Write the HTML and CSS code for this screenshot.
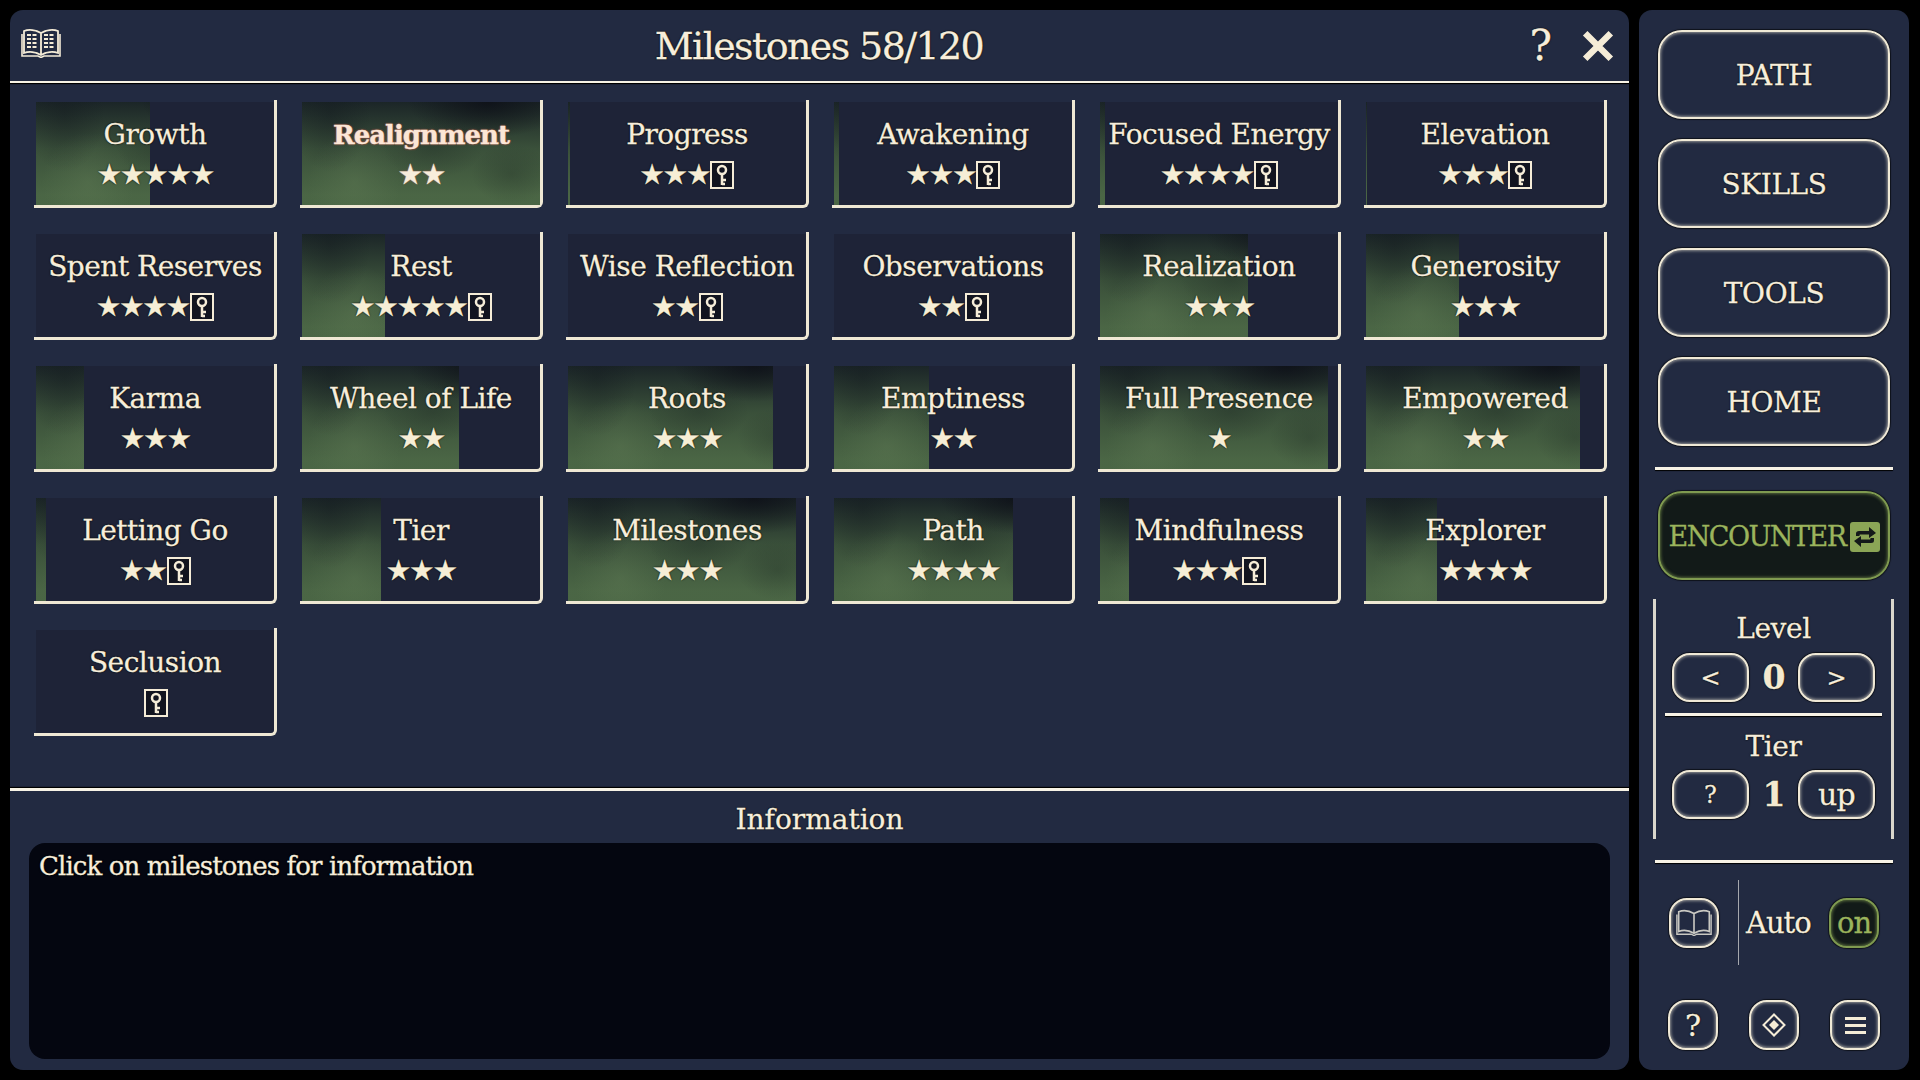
FILE: index.html
```html
<!DOCTYPE html>
<html lang="en">

<head>
    <meta charset="UTF-8">
    <title>Milestones</title>
    <link rel="stylesheet" href="styles.css">
</head>

<body>
    <svg class="defs" width="0" height="0">
        <symbol id="key" viewBox="0 0 24 28">
            <rect x="1" y="1" width="22" height="26" fill="#12141f" stroke="#f5ecd7" stroke-width="2" />
            <circle cx="12" cy="9" r="4" fill="none" stroke="#f5ecd7" stroke-width="2.5" />
            <path d="M12 13V24M12 19H16M12 23H15" fill="none" stroke="#f5ecd7" stroke-width="2.5" />
        </symbol>
        <symbol id="book" viewBox="0 0 40 30">
            <path d="M20 5C15 2 8 1 3 3V25C8 23 15 24 20 27C25 24 32 23 37 25V3C32 1 25 2 20 5ZM20 5V27" fill="none" stroke="currentColor" stroke-width="1.8" />
            <path d="M1 6V28H17L20 29.5L23 28H39V6" fill="none" stroke="currentColor" stroke-width="1.6" />
        </symbol>
    </svg>

    <div class="main">
        <div class="header">
            <svg class="logo" viewBox="0 0 40 30">
                <use href="#book" />
                <path d="M6 7H17M6 11H17M6 15H17M6 19H17M23 7H34M23 11H34M23 15H34M23 19H34" fill="none" stroke="#f5ecd7" stroke-width="2" stroke-dasharray="4 1.5" />
            </svg>
            <div class="title">Milestones 58/120</div>
            <div class="actions">
                <span class="help">?</span>
                <svg class="close" viewBox="0 0 30 30">
                    <path d="M3 3L27 27M27 3L3 27" stroke="#f5ecd7" stroke-width="6" />
                </svg>
            </div>
        </div>

        <div class="grid">
            <div class="card"><div class="fill" style="width:48%"></div><div class="name">Growth</div><div class="stars">★★★★★</div></div>
            <div class="card active"><div class="fill" style="width:100%"></div><div class="name">Realignment</div><div class="stars">★★</div></div>
            <div class="card"><div class="fill" style="width:1%"></div><div class="name">Progress</div><div class="stars">★★★<svg class="key"><use href="#key" /></svg></div></div>
            <div class="card"><div class="fill" style="width:2%"></div><div class="name">Awakening</div><div class="stars">★★★<svg class="key"><use href="#key" /></svg></div></div>
            <div class="card"><div class="fill" style="width:2%"></div><div class="name">Focused Energy</div><div class="stars">★★★★<svg class="key"><use href="#key" /></svg></div></div>
            <div class="card"><div class="fill" style="width:0.5%"></div><div class="name">Elevation</div><div class="stars">★★★<svg class="key"><use href="#key" /></svg></div></div>

            <div class="card"><div class="name">Spent Reserves</div><div class="stars">★★★★<svg class="key"><use href="#key" /></svg></div></div>
            <div class="card"><div class="fill" style="width:35%"></div><div class="name">Rest</div><div class="stars">★★★★★<svg class="key"><use href="#key" /></svg></div></div>
            <div class="card"><div class="name">Wise Reflection</div><div class="stars">★★<svg class="key"><use href="#key" /></svg></div></div>
            <div class="card"><div class="name">Observations</div><div class="stars">★★<svg class="key"><use href="#key" /></svg></div></div>
            <div class="card"><div class="fill" style="width:62%"></div><div class="name">Realization</div><div class="stars">★★★</div></div>
            <div class="card"><div class="fill" style="width:39%"></div><div class="name">Generosity</div><div class="stars">★★★</div></div>

            <div class="card"><div class="fill" style="width:20%"></div><div class="name">Karma</div><div class="stars">★★★</div></div>
            <div class="card"><div class="fill" style="width:66%"></div><div class="name">Wheel of Life</div><div class="stars">★★</div></div>
            <div class="card"><div class="fill" style="width:86%"></div><div class="name">Roots</div><div class="stars">★★★</div></div>
            <div class="card"><div class="fill" style="width:40%"></div><div class="name">Emptiness</div><div class="stars">★★</div></div>
            <div class="card"><div class="fill" style="width:96%"></div><div class="name">Full Presence</div><div class="stars">★</div></div>
            <div class="card"><div class="fill" style="width:90%"></div><div class="name">Empowered</div><div class="stars">★★</div></div>

            <div class="card"><div class="fill" style="width:4%"></div><div class="name">Letting Go</div><div class="stars">★★<svg class="key"><use href="#key" /></svg></div></div>
            <div class="card"><div class="fill" style="width:33%"></div><div class="name">Tier</div><div class="stars">★★★</div></div>
            <div class="card"><div class="fill" style="width:96%"></div><div class="name">Milestones</div><div class="stars">★★★</div></div>
            <div class="card"><div class="fill" style="width:75%"></div><div class="name">Path</div><div class="stars">★★★★</div></div>
            <div class="card"><div class="fill" style="width:12%"></div><div class="name">Mindfulness</div><div class="stars">★★★<svg class="key"><use href="#key" /></svg></div></div>
            <div class="card"><div class="fill" style="width:30%"></div><div class="name">Explorer</div><div class="stars">★★★★</div></div>

            <div class="card"><div class="name">Seclusion</div><div class="stars"><svg class="key"><use href="#key" /></svg></div></div>
        </div>

        <div class="info">
            <div class="info-title">Information</div>
            <div class="info-box">Click on milestones for information</div>
        </div>
    </div>

    <div class="side">
        <div class="nav">
            <div class="btn big">PATH</div>
            <div class="btn big">SKILLS</div>
            <div class="btn big">TOOLS</div>
            <div class="btn big">HOME</div>
        </div>
        <div class="line line-nav"></div>
        <div class="btn big green encounter">
            ENCOUNTER
            <svg class="swap" viewBox="0 0 30 30">
                <rect width="30" height="30" rx="3" fill="#8ba556" />
                <path d="M6 14V11.500Q6 9 9 9H19V5L26 11L19 16V12.500H10Q9.500 12.500 9.500 13.500V14Z" fill="#14191a" />
                <path d="M24 16V18.500Q24 21 21 21H11V25L4 19L11 14V17.500H20Q20.500 17.500 20.500 16.500V16Z" fill="#14191a" />
            </svg>
        </div>

        <div class="levels">
            <div class="level-block">
                <div class="label">Level</div>
                <div class="stepper">
                    <div class="btn small">&lt;</div>
                    <div class="count">0</div>
                    <div class="btn small">&gt;</div>
                </div>
            </div>
            <div class="line line-level"></div>
            <div class="level-block">
                <div class="label">Tier</div>
                <div class="stepper">
                    <div class="btn small">?</div>
                    <div class="count">1</div>
                    <div class="btn small up">up</div>
                </div>
            </div>
        </div>

        <div class="line line-auto"></div>

        <div class="auto">
            <div class="btn round">
                <svg class="book-icon" viewBox="0 0 40 30"><use href="#book" /></svg>
            </div>
            <div class="auto-sep"></div>
            <div class="auto-label">Auto</div>
            <div class="btn round green on">on</div>
        </div>

        <div class="bottom">
            <div class="btn round mark">?</div>
            <div class="btn round">
                <svg class="diamond" viewBox="0 0 24 24">
                    <path d="M12 1.500L22.500 12L12 22.500L1.500 12Z" fill="none" stroke="#f5ecd7" stroke-width="2" />
                    <path d="M12 7L17 12L12 17L7 12Z" fill="#f5ecd7" />
                </svg>
            </div>
            <div class="btn round">
                <div class="burger"><span></span><span></span><span></span></div>
            </div>
        </div>
    </div>
</body>

</html>
```

FILE: styles.css
```css
* {
    margin: 0;
    padding: 0;
    box-sizing: border-box;
}

body {
    width: 1920px;
    height: 1080px;
    background: #000;
    display: flex;
    gap: 10px;
    padding: 10px 11px 10px 10px;
    overflow: hidden;
    font-family: "DejaVu Serif", "Liberation Serif", serif;
    color: #f7eedb;
    text-shadow: 0 0 2px #000, 0 0 1px #000;
    -webkit-text-stroke: .3px;
}

.defs {
    position: absolute;
}

/* left panel */
.main {
    width: 1619px;
    background: #222a41;
    border-radius: 13px;
    display: flex;
    flex-direction: column;
}

.header {
    height: 73px;
    display: grid;
    grid-template-columns: 1fr auto 1fr;
    align-items: center;
    padding: 0 15px 0 14px;
    border-bottom: 2px solid #f8f3e6;
    box-shadow: 0 1px 1px #000;
}

.logo {
    width: 40px;
    height: 30px;
    color: #f5ecd7;
    margin: -6px 0 0 -3px;
}

.title {
    font-size: 38px;
    letter-spacing: -1.6px;
    margin-top: 1px;
}

.actions {
    display: flex;
    justify-content: flex-end;
    align-items: center;
    gap: 30px;
}

.help {
    font-size: 42px;
}

.close {
    width: 32px;
    height: 32px;
}

.grid {
    display: grid;
    grid-template-columns: repeat(6, 241px);
    grid-auto-rows: 106px;
    gap: 26px 25px;
    padding: 19px 0 0 26px;
    height: 705px;
}

.card {
    position: relative;
    background: #1e2337;
    border-right: 3px solid #efe8d4;
    border-bottom: 3px solid #efe8d4;
    border-bottom-right-radius: 6px;
    display: flex;
    flex-direction: column;
    align-items: center;
    padding-top: 15px;
}

/* the border lines stick out a little past the card corners */
.card::before {
    content: "";
    position: absolute;
    left: -2px;
    bottom: -3px;
    width: 2px;
    height: 3px;
    background: #efe8d4;
}

.card::after {
    content: "";
    position: absolute;
    right: -3px;
    top: -2px;
    width: 3px;
    height: 2px;
    background: #efe8d4;
}

.fill {
    position: absolute;
    left: 0;
    top: 0;
    bottom: 0;
    background:
        radial-gradient(ellipse 80px 36px at 78% 0, rgba(12, 14, 22, .8), transparent),
        radial-gradient(ellipse 40px 60px at 12% 10%, rgba(16, 22, 28, .35), transparent),
        radial-gradient(ellipse 50px 30px at 55% 45%, rgba(30, 42, 36, .35), transparent),
        radial-gradient(ellipse 40px 30px at 88% 70%, rgba(30, 42, 36, .3), transparent),
        radial-gradient(ellipse 46px 50px at 22% 78%, rgba(100, 128, 88, .35), transparent),
        linear-gradient(180deg, rgba(22, 30, 36, .9) 0, rgba(46, 64, 50, .6) 45%, rgba(60, 82, 58, .1) 90%),
        #4c6846;
    background-size: 238px 100%;
    background-repeat: no-repeat;
}

.name {
    position: relative;
    font-size: 28px;
    letter-spacing: -.5px;
    line-height: 36px;
    white-space: nowrap;
}

.stars {
    position: relative;
    font-family: "DejaVu Sans", sans-serif;
    font-size: 28px;
    letter-spacing: -1.8px;
    line-height: 32px;
    height: 32px;
    margin-top: 6px;
    display: flex;
    align-items: center;
    color: #f6eed6;
}

.key {
    width: 24px;
    height: 28px;
    margin-left: 1px;
}

.active .name {
    font-weight: bold;
    font-size: 26px;
    letter-spacing: -1px;
    color: #fbe6d6;
    text-shadow: 0 0 2px #a8524a, 0 0 2px #a8524a;
}

.active .stars {
    color: #f8eddb;
    text-shadow: 0 0 2px #a8524a;
}

.info {
    flex: 1;
    border-top: 3px solid #f8f3e6;
    box-shadow: 0 -1px 1px #000;
    padding: 0 19px 11px;
    display: flex;
    flex-direction: column;
}

.info-title {
    height: 52px;
    line-height: 57px;
    text-align: center;
    font-size: 28px;
}

.info-box {
    flex: 1;
    background: #040610;
    border-radius: 16px;
    padding: 5px 10px;
    font-size: 26px;
    letter-spacing: -.9px;
    line-height: 36px;
}

/* right panel */
.side {
    width: 270px;
    background: #222a41;
    border-radius: 13px;
    padding: 20px 16px 0;
    display: flex;
    flex-direction: column;
}

.btn {
    display: flex;
    align-items: center;
    justify-content: center;
    border: 2px solid #f0e9d6;
    box-shadow: inset 0 0 3px 1px rgba(225, 220, 205, .6), 0 0 1px 1px rgba(0, 0, 0, .6);
}

.big {
    height: 89px;
    margin: 0 3px;
    padding-top: 2px;
    border-radius: 24px;
    font-size: 28px;
    letter-spacing: -.4px;
}

.nav {
    display: flex;
    flex-direction: column;
    gap: 20px;
}

.line {
    height: 3px;
    background: #f8f3e6;
    box-shadow: 0 1px 1px #000;
}

.line-nav {
    margin-top: 21px;
    margin-bottom: 21px;
}

.green {
    background: #121a18;
    border-color: #7f9a50;
    color: #9bb45c;
    box-shadow: inset 0 0 3px 1px rgba(127, 154, 80, .6), 0 0 1px 1px rgba(0, 0, 0, .6);
}

.encounter {
    gap: 4px;
    font-size: 27px;
    letter-spacing: -1.5px;
    text-shadow: none;
}

.swap {
    width: 30px;
    height: 30px;
    flex: none;
}

.levels {
    margin: 19px 0 0 -2px;
    height: 240px;
    width: 241px;
    border-left: 3px solid #d9d6cc;
    border-right: 3px solid #d9d6cc;
    padding: 12px 9px 0;
}

.label {
    font-size: 28px;
    letter-spacing: -.4px;
    line-height: 36px;
    text-align: center;
}

.stepper {
    display: grid;
    grid-template-columns: 77px 1fr 77px;
    align-items: center;
    padding: 6px 7px 0;
}

.small {
    height: 49px;
    border-radius: 18px;
    font-size: 24px;
}

.up {
    font-size: 30px;
    letter-spacing: -.8px;
}

.count {
    font-size: 33px;
    font-weight: bold;
    letter-spacing: -1px;
    text-align: center;
    color: #f3e9cf;
}

.line-level {
    margin: 11px 0 13px;
}

.level-block + .line + .level-block .stepper {
    padding-top: 5px;
}

.line-auto {
    margin-top: 21px;
}

.auto {
    display: flex;
    align-items: center;
    height: 85px;
    margin-top: 17px;
    padding-left: 14px;
}

.round {
    width: 50px;
    height: 50px;
    border-radius: 18px;
    flex: none;
}

.book-icon {
    width: 36px;
    height: 27px;
    color: #c9c8c2;
}

.auto-sep {
    width: 1px;
    height: 85px;
    background: #a6a8ad;
    margin: 0 7px 0 19px;
}

.auto-label {
    font-size: 29px;
    letter-spacing: -1px;
    flex: 1;
}

.on {
    margin-right: 14px;
    font-size: 29px;
    letter-spacing: -1px;
    text-shadow: none;
}

.bottom {
    display: flex;
    justify-content: space-between;
    padding: 0 13px;
    margin-top: 35px;
}

.mark {
    font-size: 30px;
}

.diamond {
    width: 24px;
    height: 24px;
}

.burger {
    display: flex;
    flex-direction: column;
    gap: 4px;
}

.burger span {
    display: block;
    width: 21px;
    height: 3px;
    background: #f5ecd7;
}
```
